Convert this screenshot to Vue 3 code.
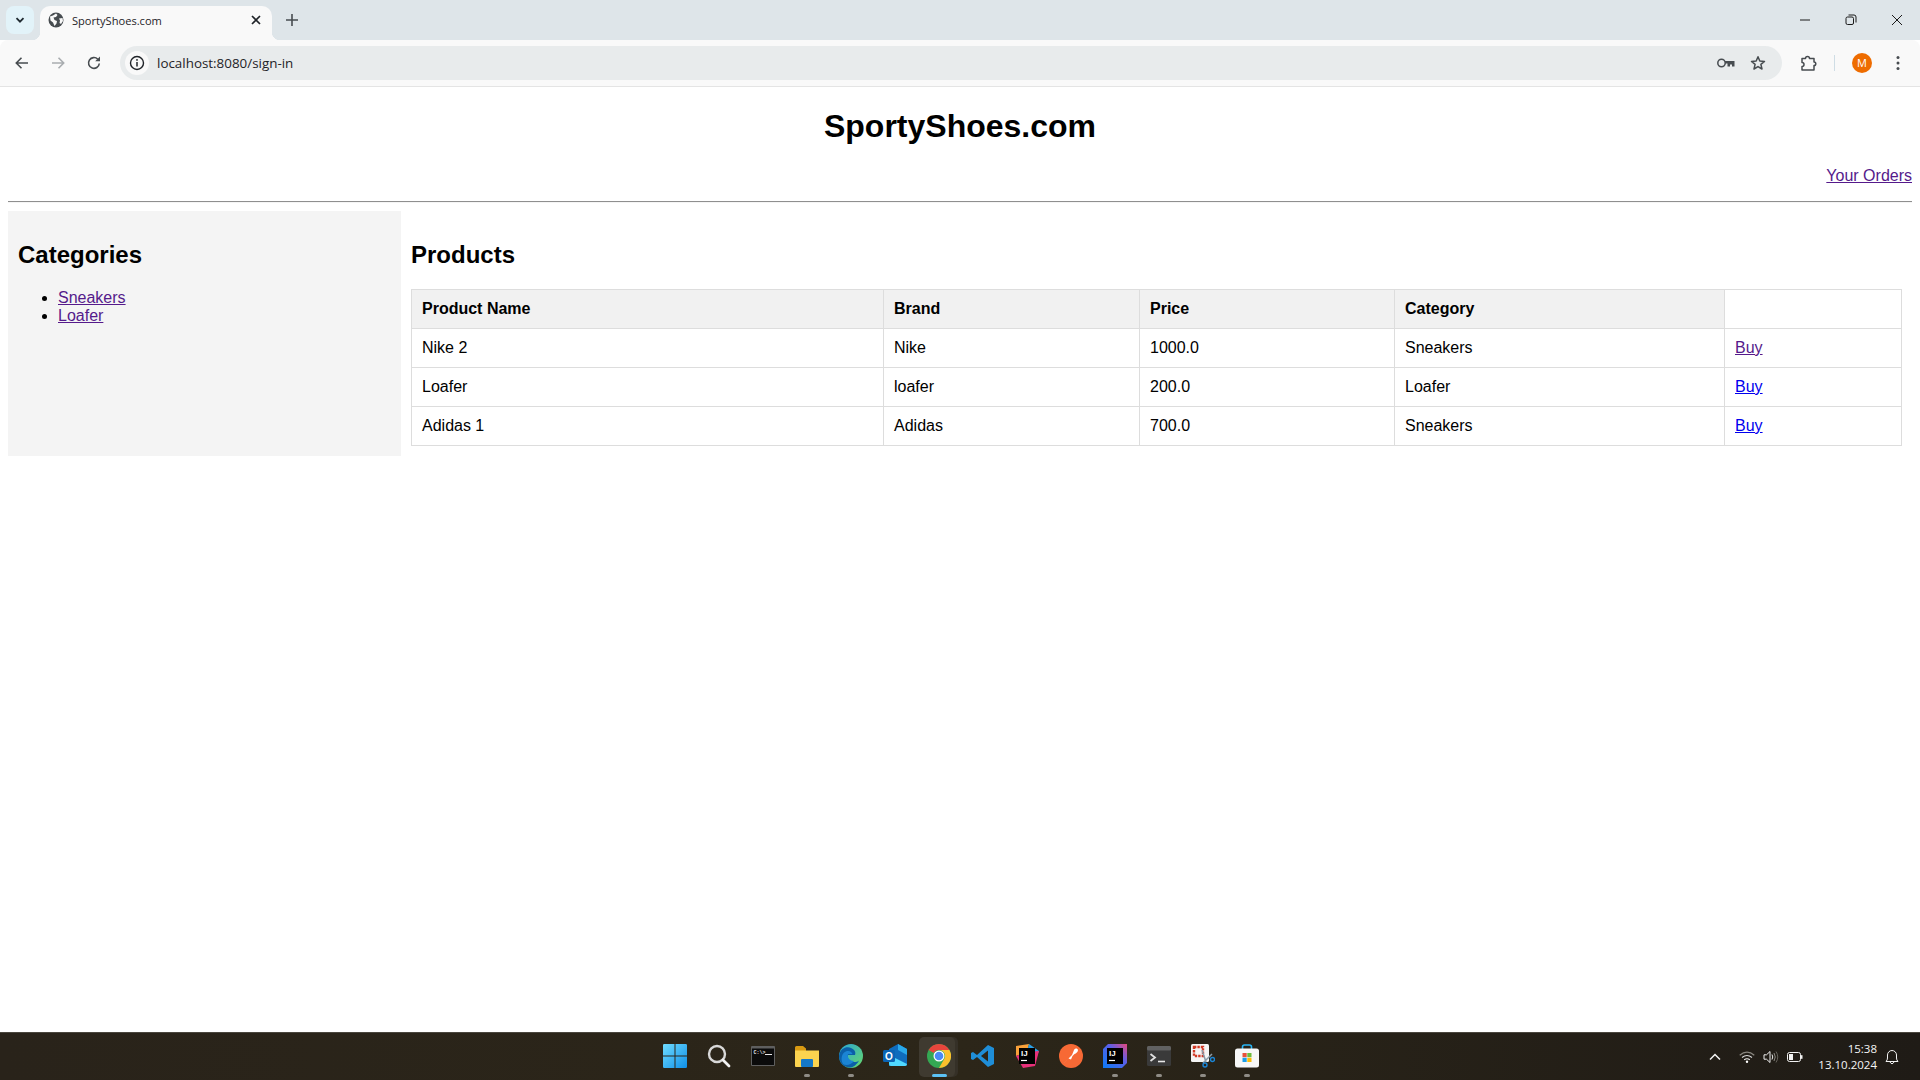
<script setup>
const products = [
  { name: 'Nike 2', brand: 'Nike', price: '1000.0', category: 'Sneakers', visited: true },
  { name: 'Loafer', brand: 'loafer', price: '200.0', category: 'Loafer', visited: false },
  { name: 'Adidas 1', brand: 'Adidas', price: '700.0', category: 'Sneakers', visited: false }
]
const categories = ['Sneakers', 'Loafer']
</script>

<template>
  <div class="screen">
    <!-- browser tabs -->
    <div class="tabstrip">
      <div class="tab-search">
        <svg width="12" height="12" viewBox="0 0 12 12"><path d="M2.5 4.2 6 7.7l3.5-3.5" fill="none" stroke="#1f2a30" stroke-width="1.8"/></svg>
      </div>
      <div class="tab">
        <svg width="16" height="16" viewBox="0 0 16 16"><circle cx="8" cy="8" r="7.5" fill="#474c50"/><path d="M2 4.5 5 3.5 8 1.5 9.5 3 8 5 5.5 5.5 6.5 8 9 9 8.5 11.5 6.5 14 5 10.5 2.5 8.5ZM11 6.5 14.5 6 15 9 13 12 11.5 11 12 8.5Z" fill="#f9f9f9"/></svg>
        <span class="tab-title">SportyShoes.com</span>
        <svg class="tab-close" width="12" height="12" viewBox="0 0 12 12"><path d="M2 2 10 10M10 2 2 10" stroke="#1f2328" stroke-width="1.7"/></svg>
      </div>
      <svg class="new-tab" width="14" height="14" viewBox="0 0 14 14"><path d="M7 1v12M1 7h12" stroke="#474c50" stroke-width="1.6"/></svg>
      <div class="window-controls">
        <svg width="12" height="12" viewBox="0 0 12 12"><path d="M1 6h10" stroke="#1a1a1a" stroke-width="1"/></svg>
        <svg width="12" height="12" viewBox="0 0 12 12"><rect x="1" y="3" width="7.5" height="7.5" rx="1.5" fill="none" stroke="#1a1a1a"/><path d="M3.5 1h5.500a2 2 0 0 1 2 2v5.500" fill="none" stroke="#1a1a1a"/></svg>
        <svg width="12" height="12" viewBox="0 0 12 12"><path d="M1 1 11 11M11 1 1 11" stroke="#1a1a1a" stroke-width="1"/></svg>
      </div>
    </div>

    <!-- browser toolbar -->
    <div class="toolbar">
      <div class="nav-buttons">
        <svg width="16" height="16" viewBox="0 0 16 16"><path d="M14 8H2.500M7.500 2.800 2.300 8l5.200 5.200" fill="none" stroke="#474c50" stroke-width="1.600"/></svg>
        <svg width="16" height="16" viewBox="0 0 16 16"><path d="M2 8h11.500M8.500 2.800 13.700 8l-5.200 5.200" fill="none" stroke="#a9adb0" stroke-width="1.600"/></svg>
        <svg width="16" height="16" viewBox="0 0 16 16"><path d="M13.300 8.500A5.400 5.400 0 1 1 11.800 4.200" fill="none" stroke="#474c50" stroke-width="1.600"/><path d="M14 1.500v4.800H9.200Z" fill="#474c50"/></svg>
      </div>
      <div class="omnibox">
        <div class="site-info">
          <svg width="16" height="16" viewBox="0 0 16 16"><circle cx="8" cy="8" r="6.500" fill="none" stroke="#1f2328" stroke-width="1.400"/><path d="M8 7v4.500" stroke="#1f2328" stroke-width="1.500"/><circle cx="8" cy="4.900" r="0.900" fill="#1f2328"/></svg>
        </div>
        <span class="url">localhost:8080/sign-in</span>
        <svg class="key-icon" width="18" height="10" viewBox="0 0 18 10"><circle cx="4.500" cy="5" r="3.700" fill="none" stroke="#474c50" stroke-width="1.500"/><path d="M8 3h9.500v5.500h-2.500v-2h-2v2h-2.500v-3H8Z" fill="#474c50"/></svg>
        <svg class="star-icon" width="16" height="16" viewBox="0 0 16 16"><path d="M8 1.700 9.800 6l4.700.4-3.600 3 1.100 4.600L8 11.600 4 14l1.100-4.600-3.600-3L6.200 6Z" fill="none" stroke="#474c50" stroke-width="1.500" stroke-linejoin="round"/></svg>
      </div>
      <svg class="ext-icon" width="18" height="18" viewBox="0 0 18 18"><path d="M2 4.500h3.500a2 2 0 0 1 4 0H14V8a1.800 1.800 0 0 1 0 3.600V16H2v-3.500a2 2 0 0 0 0-4Z" fill="none" stroke="#474c50" stroke-width="1.500" stroke-linejoin="round"/></svg>
      <span class="toolbar-divider"></span>
      <span class="avatar">M</span>
      <svg class="menu-icon" width="4" height="16" viewBox="0 0 4 16"><circle cx="2" cy="2.500" r="1.500" fill="#474c50"/><circle cx="2" cy="8" r="1.500" fill="#474c50"/><circle cx="2" cy="13.500" r="1.500" fill="#474c50"/></svg>
    </div>

    <!-- page content -->
    <div class="page">
      <h1 class="site-title">SportyShoes.com</h1>
      <p class="orders-link"><a href="#" class="visited">Your Orders</a></p>
      <hr class="divider">
      <div class="content">
        <aside class="sidebar">
          <h2>Categories</h2>
          <ul>
            <li v-for="cat in categories" :key="cat"><a href="#" class="visited">{{ cat }}</a></li>
          </ul>
        </aside>
        <main class="main">
          <h2>Products</h2>
          <table class="products">
            <thead>
              <tr>
                <th class="col-name">Product Name</th>
                <th class="col-brand">Brand</th>
                <th class="col-price">Price</th>
                <th class="col-category">Category</th>
                <th class="col-action empty"></th>
              </tr>
            </thead>
            <tbody>
              <tr v-for="p in products" :key="p.name">
                <td>{{ p.name }}</td>
                <td>{{ p.brand }}</td>
                <td>{{ p.price }}</td>
                <td>{{ p.category }}</td>
                <td><a href="#" :class="{ visited: p.visited }">Buy</a></td>
              </tr>
            </tbody>
          </table>
        </main>
      </div>
    </div>

    <!-- windows taskbar -->
    <div class="taskbar">
      <div class="task-icons">
        <div class="task-slot">
          <svg width="24" height="24" viewBox="0 0 24 24">
            <defs><linearGradient id="winBlue" x1="0" y1="0" x2="1" y2="1"><stop offset="0" stop-color="#6fdcff"/><stop offset="1" stop-color="#0f8fe8"/></linearGradient></defs>
            <path d="M0 1.200Q0 0 1.200 0H11.500V11.500H0ZM12.500 0H22.800Q24 0 24 1.200V11.500H12.500ZM0 12.500H11.500V24H1.200Q0 24 0 22.800ZM12.500 12.500H24V22.800Q24 24 22.800 24H12.500Z" fill="url(#winBlue)"/>
          </svg>
        </div>
        <div class="task-slot">
          <svg width="24" height="24" viewBox="0 0 24 24"><circle cx="10" cy="10" r="8" fill="none" stroke="#d8d8d8" stroke-width="2.400"/><path d="M16 16 22 22" stroke="#f2f2f2" stroke-width="2.800" stroke-linecap="round"/></svg>
        </div>
        <div class="task-slot">
          <svg width="24" height="20" viewBox="0 0 24 20"><rect width="24" height="20" rx="1" fill="#5f5f5f"/><rect x="1" y="2.500" width="22" height="16.500" fill="#0b0b0b"/><text x="2.500" y="8" class="cmd-text">C:\&gt;</text><path d="M14 8.500h7" stroke="#e8e8e8" stroke-width="1"/></svg>
        </div>
        <div class="task-slot">
          <svg width="24" height="24" viewBox="0 0 24 24"><path d="M0 3.500Q0 2 1.500 2H8l3 2.500v3H0Z" fill="#d99a12"/><path d="M0 6.500H24V22Q24 23 23 23H1Q0 23 0 22Z" fill="#fbd34f"/><rect x="6" y="15" width="12" height="8" rx="1" fill="#1478c8"/></svg>
          <span class="task-dot"></span>
        </div>
        <div class="task-slot">
          <svg width="24" height="24" viewBox="0 0 24 24">
            <defs><linearGradient id="edgeGreen" x1="0" y1="0" x2="1" y2="1"><stop offset="0" stop-color="#2aa5d8"/><stop offset="1" stop-color="#67d96a"/></linearGradient></defs>
            <circle cx="12" cy="12" r="12" fill="url(#edgeGreen)"/>
            <path d="M0 12C1 4 8 2 12 4c4 1.500 5 5 4 7H9c-1 4 2 7 6 7 2 0 4-.5 5-1.500-2 4-6 7.500-10 7C4 23 0 18 0 12Z" fill="#0b5fa8"/>
            <path d="M4 20C1 15 3 8 8 7c3-.5 5 1 5.500 3H9c-1 4 2 7 6 7-3 4-8 5-11 3Z" fill="#1b84d4"/>
          </svg>
          <span class="task-dot"></span>
        </div>
        <div class="task-slot">
          <svg width="24" height="24" viewBox="0 0 24 24"><path d="M6 5 15 0 24 5V20Q24 22 22 22H6Z" fill="#0f6cbd"/><path d="M15 0 24 5V11L15 6Z" fill="#28a8ea"/><path d="M6 11 24 20Q24 22 22 22H8Q6 22 6 20Z" fill="#50d9ff"/><rect x="0" y="6" width="12" height="12" rx="1.500" fill="#0a64b4"/><text x="6" y="15.700" class="outlook-text">O</text></svg>
        </div>
        <div class="task-slot active">
          <svg width="24" height="24" viewBox="0 0 24 24">
            <circle cx="12" cy="12" r="12" fill="#34a853"/>
            <path d="M12 0A12 12 0 0 1 22.400 6H12A6 6 0 0 0 6.800 9L1.600 6A12 12 0 0 1 12 0Z" fill="#e8453c"/>
            <path d="M22.400 6A12 12 0 0 1 12 24L17.200 15A6 6 0 0 0 17.200 9 6 6 0 0 0 12 6Z" fill="#fbc02d"/>
            <circle cx="12" cy="12" r="5.500" fill="#fff"/><circle cx="12" cy="12" r="4.300" fill="#4a8af4"/>
          </svg>
          <span class="task-bar"></span>
        </div>
        <div class="task-slot">
          <svg width="24" height="24" viewBox="0 0 24 24"><path d="M17 1 23 4V20L17 23 6 13 2 16 0 15V9L2 8 6 11Z" fill="#1f8ed8"/><path d="M17 6.500V17.500L10 12Z" fill="#2c2518"/></svg>
        </div>
        <div class="task-slot">
          <svg width="24" height="24" viewBox="0 0 24 24">
            <path d="M1 2 14 0 12 8 1 12Z" fill="#f9a13a"/><path d="M14 0 24 7 20 16 12 8Z" fill="#2aa0e8"/><path d="M1 12 8 24 20 22 24 7 12 8Z" fill="#e8307a"/>
            <rect x="4" y="4" width="16" height="16" fill="#000"/><text x="6" y="12" class="ij-text">IJ</text><path d="M6 16.500h6" stroke="#fff" stroke-width="1.200"/>
          </svg>
        </div>
        <div class="task-slot">
          <svg width="24" height="24" viewBox="0 0 24 24"><circle cx="12" cy="12" r="12" fill="#f76935"/><path d="M5 19 13 11 15 6C16 4 18.500 4 19 6 19 8 17 9.500 15.500 10L13.500 12 12 15.500 9.500 14.500Z" fill="#fff"/></svg>
        </div>
        <div class="task-slot">
          <svg width="24" height="24" viewBox="0 0 24 24">
            <defs><linearGradient id="ijBlue" x1="0" y1="1" x2="1" y2="0"><stop offset="0" stop-color="#0a7bf5"/><stop offset="0.6" stop-color="#5b5fe8"/><stop offset="1" stop-color="#e8477a"/></linearGradient></defs>
            <path d="M5 0H24V19L19 24H0V5Z" fill="url(#ijBlue)"/>
            <rect x="4" y="4" width="16" height="16" fill="#000"/><text x="6" y="12" class="ij-text">IJ</text><path d="M6 16.500h6" stroke="#fff" stroke-width="1.200"/>
          </svg>
          <span class="task-dot"></span>
        </div>
        <div class="task-slot">
          <svg width="24" height="20" viewBox="0 0 24 20"><rect width="24" height="20" rx="1.500" fill="#3a3a3a"/><rect width="24" height="4.500" rx="1.500" fill="#616161"/><path d="M3.500 8 8 11.500 3.500 15" fill="none" stroke="#e0e0e0" stroke-width="1.800"/><path d="M11 15.500h7" stroke="#e8e8e8" stroke-width="1.600"/></svg>
          <span class="task-dot"></span>
        </div>
        <div class="task-slot">
          <svg width="24" height="24" viewBox="0 0 24 24"><rect x="0" y="0" width="18" height="18" rx="1.500" fill="#f5f5f5"/><rect x="3" y="3" width="9" height="9" fill="none" stroke="#d13a26" stroke-width="2.400" stroke-dasharray="2.400 1"/><path d="M11 6 15 18M21 10 12 19" stroke="#8a9aa8" stroke-width="1.500"/><circle cx="14" cy="21" r="2" fill="none" stroke="#1b84d4" stroke-width="1.400"/><circle cx="21.500" cy="15.500" r="2" fill="none" stroke="#1b84d4" stroke-width="1.400"/></svg>
          <span class="task-dot"></span>
        </div>
        <div class="task-slot">
          <svg width="24" height="24" viewBox="0 0 24 24"><path d="M7.500 5V3Q7.500 1 9.500 1H14.500Q16.500 1 16.500 3V5" fill="none" stroke="#29b6f6" stroke-width="1.600"/><rect y="4.500" width="24" height="19" rx="2.500" fill="#f7f7f7"/><rect x="7.500" y="9" width="4.200" height="4.200" fill="#e8503a"/><rect x="12.300" y="9" width="4.200" height="4.200" fill="#6dbb3c"/><rect x="7.500" y="13.800" width="4.200" height="4.200" fill="#1b9de8"/><rect x="12.300" y="13.800" width="4.200" height="4.200" fill="#fbbc05"/></svg>
          <span class="task-dot"></span>
        </div>
      </div>

      <div class="tray">
        <svg class="tray-chevron" width="14" height="14" viewBox="0 0 14 14"><path d="M2 9.500 7 4.500 12 9.500" fill="none" stroke="#f2f2f2" stroke-width="1.500"/></svg>
        <svg class="tray-wifi" width="16" height="12" viewBox="0 0 16 12"><path d="M.7 4.300Q8-2 15.300 4.300" fill="none" stroke="#8a8780" stroke-width="1.200"/><path d="M3 6.500Q8 2.500 13 6.500" fill="none" stroke="#d8d8d8" stroke-width="1.200"/><path d="M5.200 8.700Q8 6.800 10.800 8.700" fill="none" stroke="#f2f2f2" stroke-width="1.200"/><circle cx="8" cy="10.800" r="1.200" fill="#fff"/></svg>
        <svg class="tray-volume" width="16" height="14" viewBox="0 0 16 14"><path d="M1 4.800H3.500L7 1.500V12.500L3.500 9.200H1Z" fill="none" stroke="#eee" stroke-width="1"/><path d="M9 4.500Q10.500 7 9 9.500" fill="none" stroke="#eee" stroke-width="1"/><path d="M11 3Q13.500 7 11 11" fill="none" stroke="#8a8780" stroke-width="1"/><path d="M13 1.500Q16.500 7 13 12.500" fill="none" stroke="#66635c" stroke-width="1"/></svg>
        <svg class="tray-battery" width="16" height="10" viewBox="0 0 16 10"><rect x=".5" y=".5" width="13" height="9" rx="2" fill="none" stroke="#f2f2f2"/><rect x="2" y="2" width="4" height="6" fill="#f2f2f2"/><rect x="14" y="3.200" width="1.500" height="3.600" fill="#f2f2f2"/></svg>
        <div class="clock">
          <span>15:38</span>
          <span>13.10.2024</span>
        </div>
        <svg class="tray-bell" width="14" height="16" viewBox="0 0 14 16"><path d="M1 12.500Q2.500 11 2.500 9V6A4.500 4.500 0 0 1 11.500 6V9Q11.500 11 13 12.500Z" fill="none" stroke="#f2f2f2" stroke-linejoin="round"/><path d="M5 13Q7 16.500 9 13" fill="none" stroke="#f2f2f2"/></svg>
      </div>
    </div>
  </div>
</template>

<style scoped>
.screen {
  width: 1920px;
  height: 1080px;
  display: flex;
  flex-direction: column;
  overflow: hidden;
  background: #fff;
  font-family: "Liberation Sans", Arial, sans-serif;
  color: #000;
}

.tabstrip {
  height: 40px;
  flex: none;
  display: flex;
  align-items: flex-start;
  background: #dee5e9;
  padding-top: 6px;
  padding-left: 6px;
  box-sizing: border-box;
}

.tab-search {
  width: 28px;
  height: 28px;
  border-radius: 8px;
  background: #e2f3f9;
  display: flex;
  align-items: center;
  justify-content: center;
}

.tab {
  position: relative;
  width: 232px;
  height: 34px;
  margin-left: 6px;
  padding: 0 10px 6px 8px;
  box-sizing: border-box;
  background: #f9f9f9;
  border-radius: 10px 10px 0 0;
  display: flex;
  align-items: center;
  z-index: 1;
}

.tab::before,
.tab::after {
  content: "";
  position: absolute;
  bottom: 0;
  width: 8px;
  height: 8px;
  background: radial-gradient(circle at 0 0, transparent 8px, #f9f9f9 8.5px);
}

.tab::before {
  left: -8px;
}

.tab::after {
  right: -8px;
  transform: scaleX(-1);
}

.tab-title {
  margin-left: 8px;
  font-family: "Open Sans", sans-serif;
  font-size: 11.1px;
  color: #1f2328;
  white-space: nowrap;
}

.tab-close {
  margin-left: auto;
}

.new-tab {
  margin-left: 13px;
  margin-top: 7px;
}

.window-controls {
  margin-left: auto;
  width: 138px;
  display: flex;
  justify-content: space-between;
  padding: 8px 17px 0 17px;
  box-sizing: border-box;
}

.toolbar {
  height: 47px;
  flex: none;
  box-sizing: border-box;
  display: flex;
  align-items: center;
  padding: 0 0 1px 14px;
  background: #f9f9f9;
  border-bottom: 1px solid #e4e4e4;
  border-radius: 8px 8px 0 0;
}

.nav-buttons {
  display: flex;
  gap: 20px;
  width: 106px;
  flex: none;
}

.omnibox {
  width: 1662px;
  height: 34px;
  flex: none;
  box-sizing: border-box;
  border-radius: 17px;
  background: #e8ebec;
  display: flex;
  align-items: center;
  padding: 0 16px 0 5px;
}

.site-info {
  width: 24px;
  height: 24px;
  border-radius: 50%;
  background: #f9f9f9;
  display: flex;
  align-items: center;
  justify-content: center;
  flex: none;
}

.url {
  margin-left: 8px;
  font-family: "Open Sans", sans-serif;
  font-size: 13.4px;
  color: #1f2328;
}

.key-icon {
  margin-left: auto;
}

.star-icon {
  margin-left: 15px;
}

.ext-icon {
  margin-left: 18px;
  flex: none;
}

.toolbar-divider {
  width: 1px;
  height: 16px;
  margin-left: 16px;
  background: #cfdde5;
  flex: none;
}

.avatar {
  width: 20px;
  height: 20px;
  margin-left: 17px;
  border-radius: 50%;
  background: #ee6c00;
  color: #fff;
  font-size: 11px;
  line-height: 20px;
  text-align: center;
  font-family: "Open Sans", sans-serif;
  flex: none;
}

.menu-icon {
  margin-left: 24px;
  flex: none;
}

.page {
  flex: 1;
  min-height: 0;
  padding: 0 8px;
}

.site-title {
  margin: 21.44px 0;
  font-size: 32px;
  text-align: center;
}

.orders-link {
  margin: 0 0 16px;
  font-size: 16px;
  text-align: right;
}

.divider {
  margin: 0 0 8px;
  height: 0;
  border: none;
  border-top: 1px solid #8f8f8f;
  border-bottom: 1px solid #f5f5f5;
}

a {
  color: #0000ee;
  text-decoration: underline;
}

a.visited {
  color: #551a8b;
}

.content {
  display: flex;
}

.sidebar {
  width: 393px;
  flex: none;
  box-sizing: border-box;
  padding: 10px;
  background: #f4f4f4;
}

.main {
  flex: 1;
  min-width: 0;
  padding: 10px;
}

h2 {
  margin: 19.92px 0;
  font-size: 24px;
}

ul {
  margin: 16px 0;
  padding-left: 40px;
}

.products {
  width: 100%;
  table-layout: fixed;
  border-collapse: collapse;
  font-size: 16px;
}

.products th,
.products td {
  padding: 10px;
  border: 1px solid #ddd;
  text-align: left;
  box-sizing: border-box;
}

.products th {
  background: #f1f1f1;
}

.products th.empty {
  background: #fff;
}

.col-name {
  width: 472px;
}

.col-brand {
  width: 256px;
}

.col-price {
  width: 255px;
}

.col-category {
  width: 330px;
}

.taskbar {
  height: 48px;
  flex: none;
  position: relative;
  display: flex;
  justify-content: center;
  background: linear-gradient(90deg, #29231a, #2c2619 50%, #1f1b16);
  border-top: 1px solid #4a463e;
  box-sizing: border-box;
}

.task-icons {
  display: flex;
  height: 100%;
  margin-left: 2px;
}

.task-slot {
  position: relative;
  width: 44px;
  height: 100%;
  padding-bottom: 2px;
  box-sizing: border-box;
  display: flex;
  align-items: center;
  justify-content: center;
}

.task-slot.active::before {
  content: "";
  position: absolute;
  left: 2px;
  right: 6px;
  top: 4px;
  bottom: 3px;
  border-radius: 5px;
  background: #3f3a30;
  box-shadow: 3px 0 0 #353027;
}

.task-slot svg {
  position: relative;
}

.task-dot {
  position: absolute;
  left: 19px;
  bottom: 3px;
  width: 6px;
  height: 3px;
  border-radius: 2px;
  background: #8f8c86;
}

.task-bar {
  position: absolute;
  left: 15px;
  bottom: 3px;
  width: 15px;
  height: 3px;
  border-radius: 2px;
  background: #5cc2f5;
}

.cmd-text {
  font-family: "Liberation Mono", monospace;
  font-size: 5px;
  font-weight: 700;
  fill: #e8e8e8;
}

.outlook-text {
  font-family: "Liberation Sans", sans-serif;
  font-size: 10px;
  font-weight: 700;
  fill: #fff;
  text-anchor: middle;
}

.ij-text {
  font-family: "Liberation Sans", sans-serif;
  font-size: 8px;
  font-weight: 700;
  fill: #fff;
}

.tray {
  position: absolute;
  right: 0;
  top: 0;
  height: 100%;
  display: flex;
  align-items: center;
  color: #f5f5f5;
}

.tray-wifi {
  margin-left: 17px;
}

.tray-volume {
  margin-left: 8px;
}

.tray-battery {
  margin-left: 8px;
}

.clock {
  margin-left: 15px;
  display: flex;
  flex-direction: column;
  align-items: flex-end;
  font-family: "Open Sans", sans-serif;
  font-size: 11.500px;
  line-height: 16px;
}

.tray-bell {
  margin-left: 8px;
  margin-right: 21px;
}
</style>
